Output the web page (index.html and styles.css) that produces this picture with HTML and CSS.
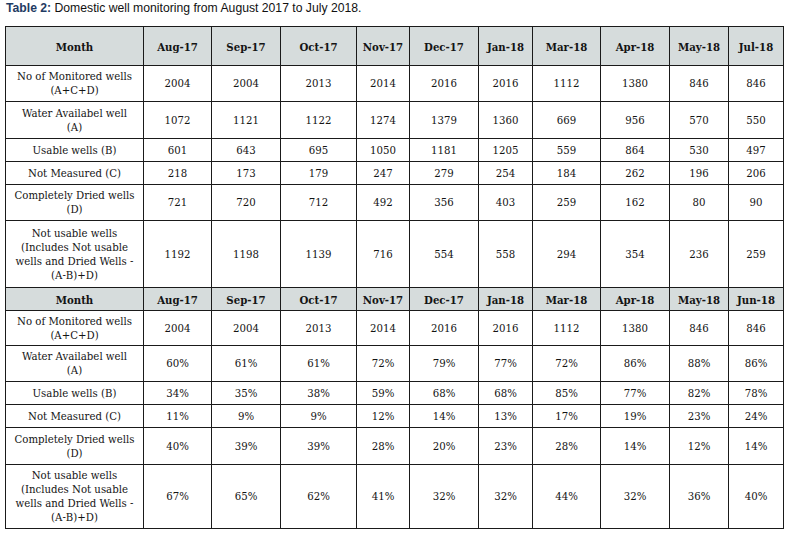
FILE: index.html
```html
<!DOCTYPE html>
<html>
<head>
<meta charset="utf-8">
<link rel="stylesheet" href="styles.css">
</head>
<body>
<p class="caption"><b>Table 2:</b> Domestic well monitoring from August 2017 to July 2018.</p>
<table class="data">
<colgroup>
<col class="c-label"><col class="c68"><col class="c69"><col class="c76"><col class="c53"><col class="c69"><col class="c54"><col class="c68"><col class="c69"><col class="c59"><col class="c55">
</colgroup>
<tbody>
<tr class="head h39"><th>Month</th><th>Aug-17</th><th>Sep-17</th><th>Oct-17</th><th>Nov-17</th><th>Dec-17</th><th>Jan-18</th><th>Mar-18</th><th>Apr-18</th><th>May-18</th><th>Jul-18</th></tr>
<tr class="h36"><td>No of Monitored wells<br>(A+C+D)</td><td>2004</td><td>2004</td><td>2013</td><td>2014</td><td>2016</td><td>2016</td><td>1112</td><td>1380</td><td>846</td><td>846</td></tr>
<tr class="h37"><td>Water Availabel well<br>(A)</td><td>1072</td><td>1121</td><td>1122</td><td>1274</td><td>1379</td><td>1360</td><td>669</td><td>956</td><td>570</td><td>550</td></tr>
<tr class="h23"><td>Usable wells (B)</td><td>601</td><td>643</td><td>695</td><td>1050</td><td>1181</td><td>1205</td><td>559</td><td>864</td><td>530</td><td>497</td></tr>
<tr class="h23"><td>Not Measured (C)</td><td>218</td><td>173</td><td>179</td><td>247</td><td>279</td><td>254</td><td>184</td><td>262</td><td>196</td><td>206</td></tr>
<tr class="h36"><td>Completely Dried wells<br>(D)</td><td>721</td><td>720</td><td>712</td><td>492</td><td>356</td><td>403</td><td>259</td><td>162</td><td>80</td><td>90</td></tr>
<tr class="h67"><td>Not usable wells<br>(Includes Not usable<br>wells and Dried Wells -<br>(A-B)+D)</td><td>1192</td><td>1198</td><td>1139</td><td>716</td><td>554</td><td>558</td><td>294</td><td>354</td><td>236</td><td>259</td></tr>
<tr class="head h23"><th>Month</th><th>Aug-17</th><th>Sep-17</th><th>Oct-17</th><th>Nov-17</th><th>Dec-17</th><th>Jan-18</th><th>Mar-18</th><th>Apr-18</th><th>May-18</th><th>Jun-18</th></tr>
<tr class="h35"><td>No of Monitored wells<br>(A+C+D)</td><td>2004</td><td>2004</td><td>2013</td><td>2014</td><td>2016</td><td>2016</td><td>1112</td><td>1380</td><td>846</td><td>846</td></tr>
<tr class="h36"><td>Water Availabel well<br>(A)</td><td>60%</td><td>61%</td><td>61%</td><td>72%</td><td>79%</td><td>77%</td><td>72%</td><td>86%</td><td>88%</td><td>86%</td></tr>
<tr class="h23"><td>Usable wells (B)</td><td>34%</td><td>35%</td><td>38%</td><td>59%</td><td>68%</td><td>68%</td><td>85%</td><td>77%</td><td>82%</td><td>78%</td></tr>
<tr class="h23"><td>Not Measured (C)</td><td>11%</td><td>9%</td><td>9%</td><td>12%</td><td>14%</td><td>13%</td><td>17%</td><td>19%</td><td>23%</td><td>24%</td></tr>
<tr class="h37"><td>Completely Dried wells<br>(D)</td><td>40%</td><td>39%</td><td>39%</td><td>28%</td><td>20%</td><td>23%</td><td>28%</td><td>14%</td><td>12%</td><td>14%</td></tr>
<tr class="h64"><td>Not usable wells<br>(Includes Not usable<br>wells and Dried Wells -<br>(A-B)+D)</td><td>67%</td><td>65%</td><td>62%</td><td>41%</td><td>32%</td><td>32%</td><td>44%</td><td>32%</td><td>36%</td><td>40%</td></tr>
</tbody>
</table>
</body>
</html>
```
FILE: styles.css
```css
html, body {
  margin: 0;
  padding: 0;
  background: #ffffff;
}
body {
  padding: 1px 0 0 6px;
}
.caption {
  margin: 0 0 11px 0;
  font-family: "Liberation Sans", Arial, sans-serif;
  font-size: 12.2px;
  line-height: 14px;
  color: #111;
}
.caption b {
  color: #1f3b63;
}
.data {
  margin-left: -1px;
  border-collapse: collapse;
  table-layout: fixed;
  width: 779px;
  font-family: "DejaVu Serif", "Liberation Serif", serif;
  font-stretch: condensed;
  font-size: 11.3px;
  line-height: 14px;
  color: #141414;
}
.data th, .data td {
  border: 1px solid #1a1a1a;
  padding: 1px 1px 0 1px;
  text-align: center;
  vertical-align: middle;
}
.data th {
  font-weight: bold;
}
.head {
  background: #d6dcdc;
}
.c-label { width: 138px; }
.c53 { width: 53px; }
.c54 { width: 54px; }
.c55 { width: 55px; }
.c59 { width: 59px; }
.c68 { width: 68px; }
.c69 { width: 69px; }
.c76 { width: 76px; }
.h23 { height: 23px; }
.h35 { height: 35px; }
.h36 { height: 36px; }
.h37 { height: 37px; }
.h39 { height: 39px; }
.h64 { height: 64px; }
.h67 { height: 67px; }
```
